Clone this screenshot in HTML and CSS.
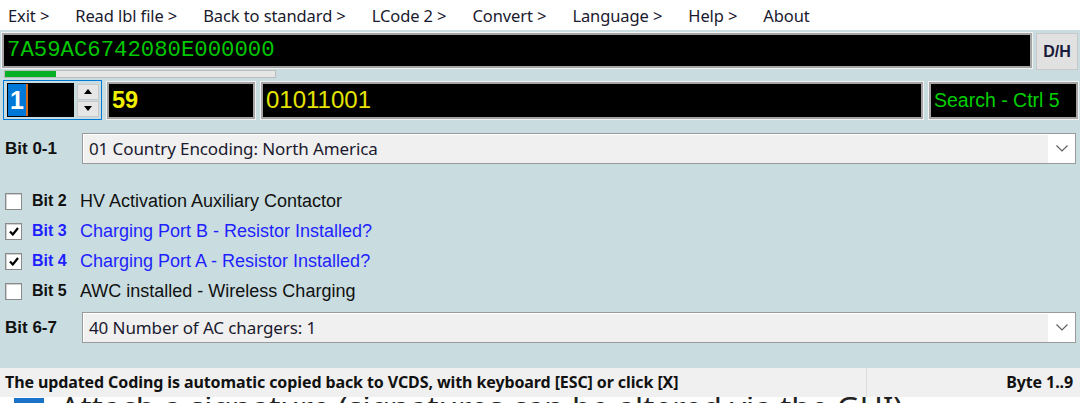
FILE: index.html
```html
<!DOCTYPE html>
<html lang="en">
<head>
  <meta charset="UTF-8" />
  <title>LCode</title>
  <link rel="stylesheet" href="styles.css">
</head>
<body>
  <div class="menubar">
    <span class="menu-item">Exit &gt;</span>
    <span class="menu-item">Read lbl file &gt;</span>
    <span class="menu-item">Back to standard &gt;</span>
    <span class="menu-item">LCode 2 &gt;</span>
    <span class="menu-item">Convert &gt;</span>
    <span class="menu-item">Language &gt;</span>
    <span class="menu-item">Help &gt;</span>
    <span class="menu-item">About</span>
  </div>

  <div class="app">
    <div class="code-row">
      <div class="code-field">7A59AC6742080E000000</div>
      <button class="btn-dh">D/H</button>
    </div>

    <div class="progress"><div class="progress-fill" style="width: 19%"></div></div>

    <div class="byte-row">
      <div class="spinner">
        <div class="spin-edit"><span class="spin-sel">1</span><span class="caret"></span></div>
        <div class="spin-buttons">
          <div class="spin-btn"><svg width="8" height="5" viewBox="0 0 8 5"><path d="M0 5L4 0L8 5z" fill="#000"/></svg></div>
          <div class="spin-btn"><svg width="8" height="5" viewBox="0 0 8 5"><path d="M0 0L4 5L8 0z" fill="#000"/></svg></div>
        </div>
      </div>
      <div class="lcd lcd-hex">59</div>
      <div class="lcd lcd-bin">01011001</div>
      <div class="lcd lcd-search">Search - Ctrl 5</div>
    </div>

    <div class="field-row sel-first">
      <span class="bit-label">Bit 0-1</span>
      <div class="combo">
        <span>01 Country Encoding: North America</span>
        <span class="combo-arrow"><svg width="12" height="7" viewBox="0 0 12 7"><path d="M0.5 0.5L6 6L11.5 0.5" fill="none" stroke="#606060" stroke-width="1.2"/></svg></span>
      </div>
    </div>

    <div class="bits">
      <div class="bit-row">
        <span class="check"></span>
        <span class="bit-name">Bit 2</span>
        <span class="bit-desc">HV Activation Auxiliary Contactor</span>
      </div>
      <div class="bit-row on">
        <span class="check"><svg width="10" height="9" viewBox="0 0 10 9"><path d="M1 4.5L3.8 7.5L9 1" fill="none" stroke="#000" stroke-width="2.2"/></svg></span>
        <span class="bit-name">Bit 3</span>
        <span class="bit-desc">Charging Port B - Resistor Installed?</span>
      </div>
      <div class="bit-row on">
        <span class="check"><svg width="10" height="9" viewBox="0 0 10 9"><path d="M1 4.5L3.8 7.5L9 1" fill="none" stroke="#000" stroke-width="2.2"/></svg></span>
        <span class="bit-name">Bit 4</span>
        <span class="bit-desc">Charging Port A - Resistor Installed?</span>
      </div>
      <div class="bit-row">
        <span class="check"></span>
        <span class="bit-name">Bit 5</span>
        <span class="bit-desc">AWC installed - Wireless Charging</span>
      </div>
    </div>

    <div class="field-row sel-last">
      <span class="bit-label">Bit 6-7</span>
      <div class="combo">
        <span>40 Number of AC chargers: 1</span>
        <span class="combo-arrow"><svg width="12" height="7" viewBox="0 0 12 7"><path d="M0.5 0.5L6 6L11.5 0.5" fill="none" stroke="#606060" stroke-width="1.2"/></svg></span>
      </div>
    </div>
  </div>

  <div class="statusbar">
    <div class="status-main">The updated Coding is automatic copied back to VCDS, with keyboard [ESC] or click [X]</div>
    <div class="status-byte">Byte 1..9</div>
  </div>

  <div class="behind">
    <div class="behind-line">
      <span class="behind-box"></span>
      <span class="behind-text">Attach a signature (signatures can be altered via the GUI)</span>
    </div>
  </div>
</body>
</html>
```

FILE: styles.css
```css
* {
  box-sizing: border-box;
}

body {
  margin: 0;
  width: 1080px;
  height: 403px;
  overflow: hidden;
  background: #fff;
  font-family: 'Noto Sans', 'Open Sans', sans-serif;
  color: #000;
}

/* menu */
.menubar {
  height: 30px;
  display: flex;
  align-items: center;
  gap: 26px;
  padding-left: 8px;
  font-size: 16.5px;
  letter-spacing: -0.1px;
  background: #fff;
  color: #1a1a2e;
}

.app {
  background: #c9dde0;
  height: 338px;
  padding: 3px 2px 0 2px;
}

/* code line */
.code-row {
  display: flex;
  align-items: flex-start;
  gap: 4px;
}

.code-field {
  flex: 1;
  height: 35px;
  background: #000;
  border: 2px solid #a5a5a5;
  outline: 1px solid #f2f2f2;
  color: #00c800;
  font-family: 'Liberation Mono', monospace;
  font-size: 22.3px;
  line-height: 30px;
  padding-left: 3px;
}

.btn-dh {
  width: 42px;
  height: 37px;
  background: #e1e1e1;
  border: 1px solid #c8c8c8;
  font-family: 'Liberation Sans', Arial, sans-serif;
  font-weight: bold;
  font-size: 16px;
  color: #1a1a3a;
  padding: 0;
}

.progress {
  width: 272px;
  height: 8px;
  margin: 0 0 0 2px;
  background: #e6e6e6;
  border: 1px solid #bcbcbc;
}

.progress-fill {
  height: 100%;
  background: #06b025;
}

/* byte line */
.byte-row {
  display: flex;
  align-items: center;
  margin-top: 2px;
  height: 40px;
}

.spinner {
  display: flex;
  align-items: center;
  width: 99px;
  height: 40px;
  margin-left: 1px;
  border: 1px solid #0078d7;
  padding: 2px 2px 2px 3px;
  gap: 3px;
}

.spin-edit {
  width: 67px;
  height: 34px;
  background: #000;
  display: flex;
  align-items: center;
  padding-left: 1px;
}

.spin-sel {
  background: #0078d7;
  color: #fff;
  font-family: 'Liberation Sans', Arial, sans-serif;
  font-weight: bold;
  font-size: 25px;
  line-height: 32px;
  padding: 0 2px 0 2px;
}

.caret {
  width: 2px;
  height: 32px;
  background: #d26a1a;
}

.spin-buttons {
  display: flex;
  flex-direction: column;
  gap: 1px;
}

.spin-btn {
  width: 22px;
  height: 16px;
  background: #e6e6e6;
  border: 1px solid #c8c8c8;
  display: flex;
  align-items: center;
  justify-content: center;
}

.lcd {
  height: 37px;
  background: #000;
  border: 2px solid #a5a5a5;
  outline: 1px solid #f2f2f2;
  font-family: 'Liberation Sans', Arial, sans-serif;
  display: flex;
  align-items: center;
  padding-left: 3px;
}

.lcd-hex {
  width: 148px;
  margin-left: 5px;
  color: #f0f000;
  font-weight: bold;
  font-size: 23.5px;
}

.lcd-bin {
  width: 662px;
  margin-left: 6px;
  color: #e4e400;
  font-size: 24px;
}

.lcd-search {
  width: 149px;
  margin-left: 6px;
  color: #00d000;
  font-size: 19.5px;
}

/* combos */
.field-row {
  display: flex;
  align-items: center;
}

.sel-first {
  margin-top: 13px;
}

.sel-last {
  margin-top: 6px;
}

.bit-label {
  width: 80px;
  padding-left: 3px;
  font-family: 'Liberation Sans', Arial, sans-serif;
  font-weight: bold;
  font-size: 17px;
  color: #111;
}

.combo {
  width: 994px;
  height: 31px;
  display: flex;
  align-items: center;
  justify-content: space-between;
  background: #f0f0f0;
  border: 1px solid #9a9a9a;
  box-shadow: inset 1px 1px 0 #fff;
  padding-left: 6px;
  font-size: 17px;
  letter-spacing: -0.1px;
  color: #1a1a2e;
}

.combo-arrow {
  width: 27px;
  height: 29px;
  background: #fff;
  display: flex;
  align-items: center;
  justify-content: center;
}

/* bit checkboxes */
.bits {
  margin-top: 22px;
}

.bit-row {
  height: 30px;
  display: flex;
  align-items: center;
  font-family: 'Liberation Sans', Arial, sans-serif;
  font-size: 16px;
  color: #111;
}

.check {
  width: 17px;
  height: 17px;
  margin-left: 3px;
  background: #fff;
  border: 1px solid #8a8a8a;
  box-shadow: inset 1px 1px 0 #d0d0d0;
  display: flex;
  align-items: center;
  justify-content: center;
}

.bit-name {
  width: 48px;
  margin-left: 10px;
  font-weight: bold;
}

.bit-desc {
  font-size: 18px;
}

.bit-row.on {
  color: #1f1fff;
}

/* status */
.statusbar {
  height: 29px;
  display: flex;
  background: #f0f0f0;
  font-size: 16px;
  font-weight: bold;
  letter-spacing: -0.1px;
  color: #111;
}

.status-main {
  width: 867px;
  padding-left: 5px;
  line-height: 29px;
  border-right: 1px solid #dcdcdc;
}

.status-byte {
  flex: 1;
  text-align: right;
  padding-right: 7px;
  line-height: 29px;
}

.behind {
  height: 6px;
  overflow: hidden;
  background: #fff;
}

.behind-line {
  display: flex;
  align-items: flex-start;
  color: #222;
}

.behind-text {
  font-size: 31.5px;
  line-height: 14px;
  margin-top: 3px;
}

.behind-box {
  width: 30px;
  height: 30px;
  margin: 1px 16px 0 14px;
  background: #1a73c8;
}
```
